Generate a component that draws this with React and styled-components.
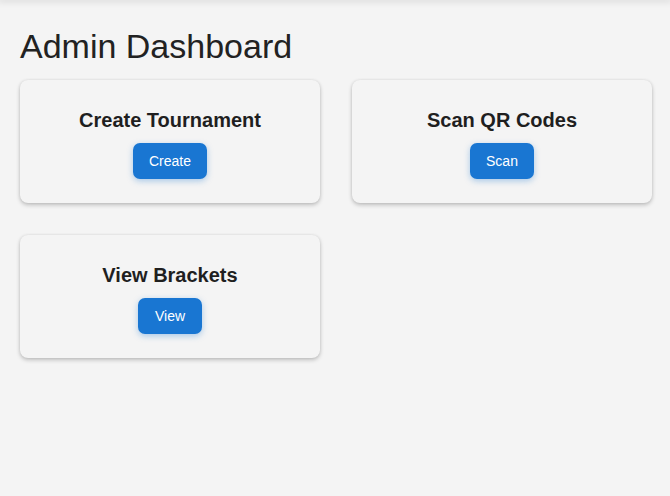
import React from 'react'
import styled, { createGlobalStyle } from 'styled-components'

const GlobalStyle = createGlobalStyle`
  html, body {
    margin: 0;
    padding: 0;
    background: #f4f4f4;
    font-family: "Liberation Sans", Arial, sans-serif;
    color: #1f1f1f;
  }
`

const TopEdge = styled.div`
  height: 0;
  box-shadow: 0 0 6px 2px rgba(0, 0, 0, 0.12);
`

const Page = styled.div`
  padding: 20px 20px;
`

const Title = styled.h1`
  margin: 6px 0 14px;
  font-size: 34px;
  font-weight: 400;
  line-height: 40px;
  color: #222;
`

const Grid = styled.div`
  display: grid;
  grid-template-columns: 300px 300px;
  column-gap: 32px;
  row-gap: 32px;
`

const Card = styled.div`
  background: #f4f4f4;
  border-radius: 8px;
  box-shadow: 0 2px 4px rgba(0, 0, 0, 0.22), 0 0 3px rgba(0, 0, 0, 0.08);
  padding: 29px 16px 24px;
  display: flex;
  flex-direction: column;
  align-items: center;
`

const CardTitle = styled.h3`
  margin: 0 0 11px;
  font-size: 20px;
  font-weight: 700;
  line-height: 23px;
  color: #1f1f1f;
`

const ActionButton = styled.button`
  height: 36px;
  min-width: 64px;
  padding: 0 16px;
  border: none;
  border-radius: 7px;
  background: #1976d2;
  color: #fff;
  font-family: inherit;
  font-size: 14px;
  box-shadow: 0 2px 6px rgba(25, 118, 210, 0.35);
  cursor: pointer;
`

const cards = [
  { title: 'Create Tournament', action: 'Create' },
  { title: 'Scan QR Codes', action: 'Scan' },
  { title: 'View Brackets', action: 'View' },
]

export default function App() {
  return (
    <>
      <GlobalStyle />
      <TopEdge />
      <Page>
        <Title>Admin Dashboard</Title>
        <Grid>
          {cards.map(card => (
            <Card key={card.title}>
              <CardTitle>{card.title}</CardTitle>
              <ActionButton>{card.action}</ActionButton>
            </Card>
          ))}
        </Grid>
      </Page>
    </>
  )
}
